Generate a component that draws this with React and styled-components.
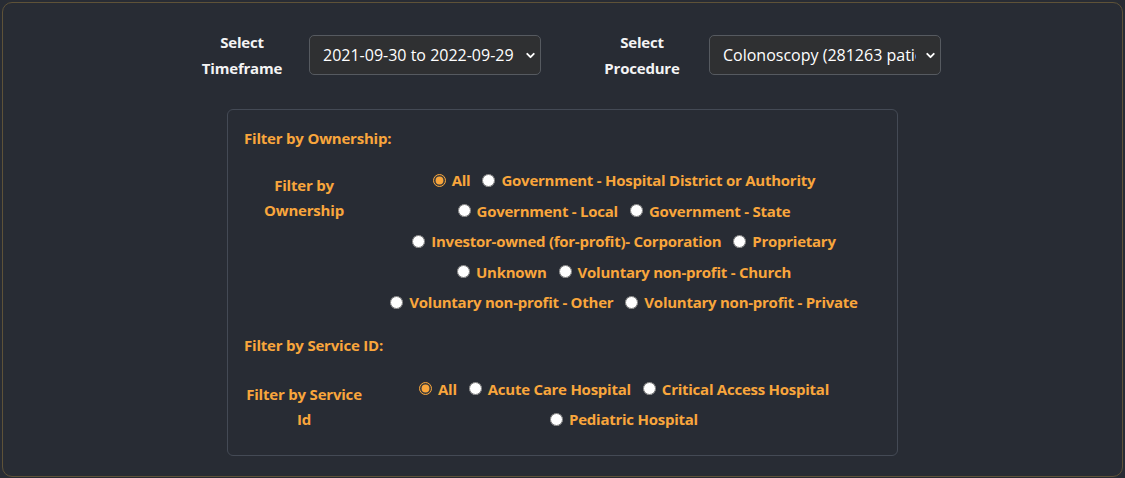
import React, { useState } from 'react';
import styled, { createGlobalStyle } from 'styled-components';
import { ChevronDown } from 'lucide-react';

const GlobalStyle = createGlobalStyle`
  html, body {
    margin: 0;
    padding: 0;
    background: #282c34;
  }
  body {
    font-family: "Open Sans", "Noto Sans", "Liberation Sans", sans-serif;
  }
  * { box-sizing: border-box; }
`;

const ownershipOptions = [
  'All',
  'Government - Hospital District or Authority',
  'Government - Local',
  'Government - State',
  'Investor-owned (for-profit)- Corporation',
  'Proprietary',
  'Unknown',
  'Voluntary non-profit - Church',
  'Voluntary non-profit - Other',
  'Voluntary non-profit - Private',
];

const serviceOptions = ['All', 'Acute Care Hospital', 'Critical Access Hospital', 'Pediatric Hospital'];

const App = () => {
  const [ownership, setOwnership] = useState('All');
  const [service, setService] = useState('All');

  return (
    <>
      <GlobalStyle />
      <Wrapper>
        <SelectRow>
          <SelectGroup>
            <SelectLabel>Select Timeframe</SelectLabel>
            <SelectBox>
              <Select defaultValue="2021">
                <option value="2021">2021-09-30 to 2022-09-29</option>
              </Select>
              <Chevron size={13} strokeWidth={3.5} />
            </SelectBox>
          </SelectGroup>
          <SelectGroup>
            <SelectLabel>Select Procedure</SelectLabel>
            <SelectBox>
              <Select defaultValue="colon">
                <option value="colon">Colonoscopy (281263 patients)</option>
              </Select>
              <Chevron size={13} strokeWidth={3.5} />
            </SelectBox>
          </SelectGroup>
        </SelectRow>

        <FilterPanel>
          <SectionTitle>Filter by Ownership:</SectionTitle>
          <FilterRow>
            <FilterLabel>Filter by Ownership</FilterLabel>
            <Options>
              {ownershipOptions.map((o) => (
                <Option key={o}>
                  <Radio
                    type="radio"
                    name="ownership"
                    checked={ownership === o}
                    onChange={() => setOwnership(o)}
                  />
                  {o}
                </Option>
              ))}
            </Options>
          </FilterRow>

          <SectionTitle $top={16} $bottom={18}>Filter by Service ID:</SectionTitle>
          <FilterRow>
            <FilterLabel>Filter by Service Id</FilterLabel>
            <Options>
              {serviceOptions.map((o) => (
                <Option key={o}>
                  <Radio
                    type="radio"
                    name="service"
                    checked={service === o}
                    onChange={() => setService(o)}
                  />
                  {o}
                </Option>
              ))}
            </Options>
          </FilterRow>
        </FilterPanel>
      </Wrapper>
    </>
  );
};

export default App;

const Wrapper = styled.div`
  margin: 2px;
  min-height: 474px;
  border: 1px solid #5e5238;
  border-radius: 10px;
  padding: 26px 0 20px;
  display: flex;
  flex-direction: column;
  align-items: center;
`;

const SelectRow = styled.div`
  display: flex;
  align-items: center;
  gap: 43px;
`;

const SelectGroup = styled.div`
  display: flex;
  align-items: center;
`;

const SelectLabel = styled.div`
  width: 116px;
  margin-right: 9px;
  text-align: center;
  color: #f4f4f4;
  font-weight: 700;
  font-size: 15px;
  line-height: 26px;
  letter-spacing: -0.2px;
  padding: 0 8px;
`;

const SelectBox = styled.div`
  position: relative;
  width: 232px;
  height: 40px;
`;

const Select = styled.select`
  appearance: none;
  width: 100%;
  height: 100%;
  background: #2f3032;
  color: #ffffff;
  border: 1px solid #565a60;
  border-radius: 5px;
  padding: 0 24px 0 13px;
  font-family: "Open Sans", "Noto Sans", sans-serif;
  font-size: 16px;
  outline: none;
`;

const Chevron = styled(ChevronDown)`
  position: absolute;
  right: 4px;
  top: 14px;
  color: #ffffff;
  pointer-events: none;
`;

const FilterPanel = styled.div`
  margin-top: 28px;
  width: 671px;
  border: 1px solid #444a55;
  border-radius: 6px;
  padding: 17px 16px 20px;
`;

const SectionTitle = styled.div`
  color: #f9a63c;
  font-weight: 700;
  font-size: 15px;
  line-height: 22px;
  letter-spacing: -0.2px;
  margin-top: ${(p) => p.$top || 0}px;
  margin-bottom: ${(p) => p.$bottom || 16}px;
`;

const FilterRow = styled.div`
  display: flex;
  align-items: flex-start;
`;

const FilterLabel = styled.div`
  width: 124px;
  margin-left: -2px;
  flex-shrink: 0;
  text-align: center;
  color: #f9a63c;
  font-weight: 700;
  font-size: 15px;
  line-height: 25px;
  letter-spacing: -0.2px;
  padding-top: 8px;
`;

const Options = styled.div`
  flex: 1;
  display: flex;
  flex-wrap: wrap;
  justify-content: center;
  column-gap: 12px;
  padding: 0 12px 0 13px;
`;

const Option = styled.label`
  display: inline-flex;
  align-items: center;
  height: 30.5px;
  color: #f9a63c;
  font-weight: 700;
  font-size: 15px;
  letter-spacing: -0.25px;
  white-space: nowrap;
  cursor: pointer;
`;

const Radio = styled.input`
  accent-color: #f9a63c;
  width: 13px;
  height: 13px;
  margin: 0 6px 0 0;
`;
